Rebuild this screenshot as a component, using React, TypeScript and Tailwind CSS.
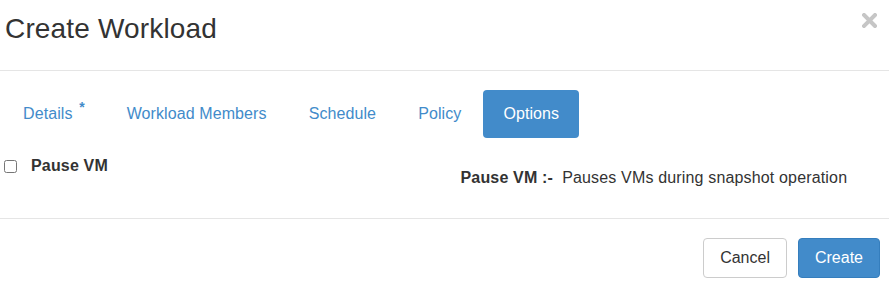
export default function App() {
    const tabs = ["Workload Members", "Schedule", "Policy"];

    return (
        <div className="h-[283px] w-[889px] bg-white font-['Liberation_Sans',Arial,sans-serif] tracking-[0.01em] text-[#333]">
            <div className="flex h-[71px] justify-between border-b border-[#e5e5e5] pl-[5px] pr-[12px]">
                <h1 className="pt-[13px] text-[28px] leading-[32px] font-normal">Create Workload</h1>
                <button className="mt-[13px] h-[15px] w-[15px]">
                    <svg viewBox="0 0 15 15" width="15" height="15">
                        <path d="M2 2L13 13M13 2L2 13" stroke="#c6c6c6" strokeWidth="4" strokeLinecap="square" />
                    </svg>
                </button>
            </div>

            <div className="h-[148px] border-b border-[#e5e5e5]">
                <ul className="ml-[3px] flex gap-[2px] pt-[19px] text-[16px] leading-[18px] tracking-[0.006em]">
                    <li className="px-[20px] py-[15px] text-[#428bca]">
                        Details <sup className="ml-[2px] text-[14px] font-bold">*</sup>
                    </li>
                    {tabs.map((t) => (
                        <li key={t} className="px-[20px] py-[15px] text-[#428bca]">
                            {t}
                        </li>
                    ))}
                    <li className="rounded-[4px] bg-[#428bca] px-[20px] py-[15px] text-white">Options</li>
                </ul>

                <div className="grid grid-cols-2 pt-[18px] text-[16px] leading-[20px]">
                    <div className="flex items-start">
                        <input type="checkbox" className="ml-[4px] mt-[4px] h-[13px] w-[13px]" />
                        <label className="ml-[14px] font-bold">Pause VM</label>
                    </div>
                    <p className="mt-[12px] pl-[16px]">
                        <span className="font-bold">Pause VM :-</span>&nbsp; Pauses VMs during snapshot operation
                    </p>
                </div>
            </div>

            <div className="flex justify-end gap-[11px] pr-[9px] pt-[19px] tracking-normal">
                <button className="h-[40px] rounded-[4px] border border-[#ccc] bg-white px-[16px] text-[16px] text-[#333]">
                    Cancel
                </button>
                <button className="h-[40px] rounded-[4px] border border-[#357ebd] bg-[#428bca] px-[16px] text-[16px] text-white">
                    Create
                </button>
            </div>
        </div>
    );
}
